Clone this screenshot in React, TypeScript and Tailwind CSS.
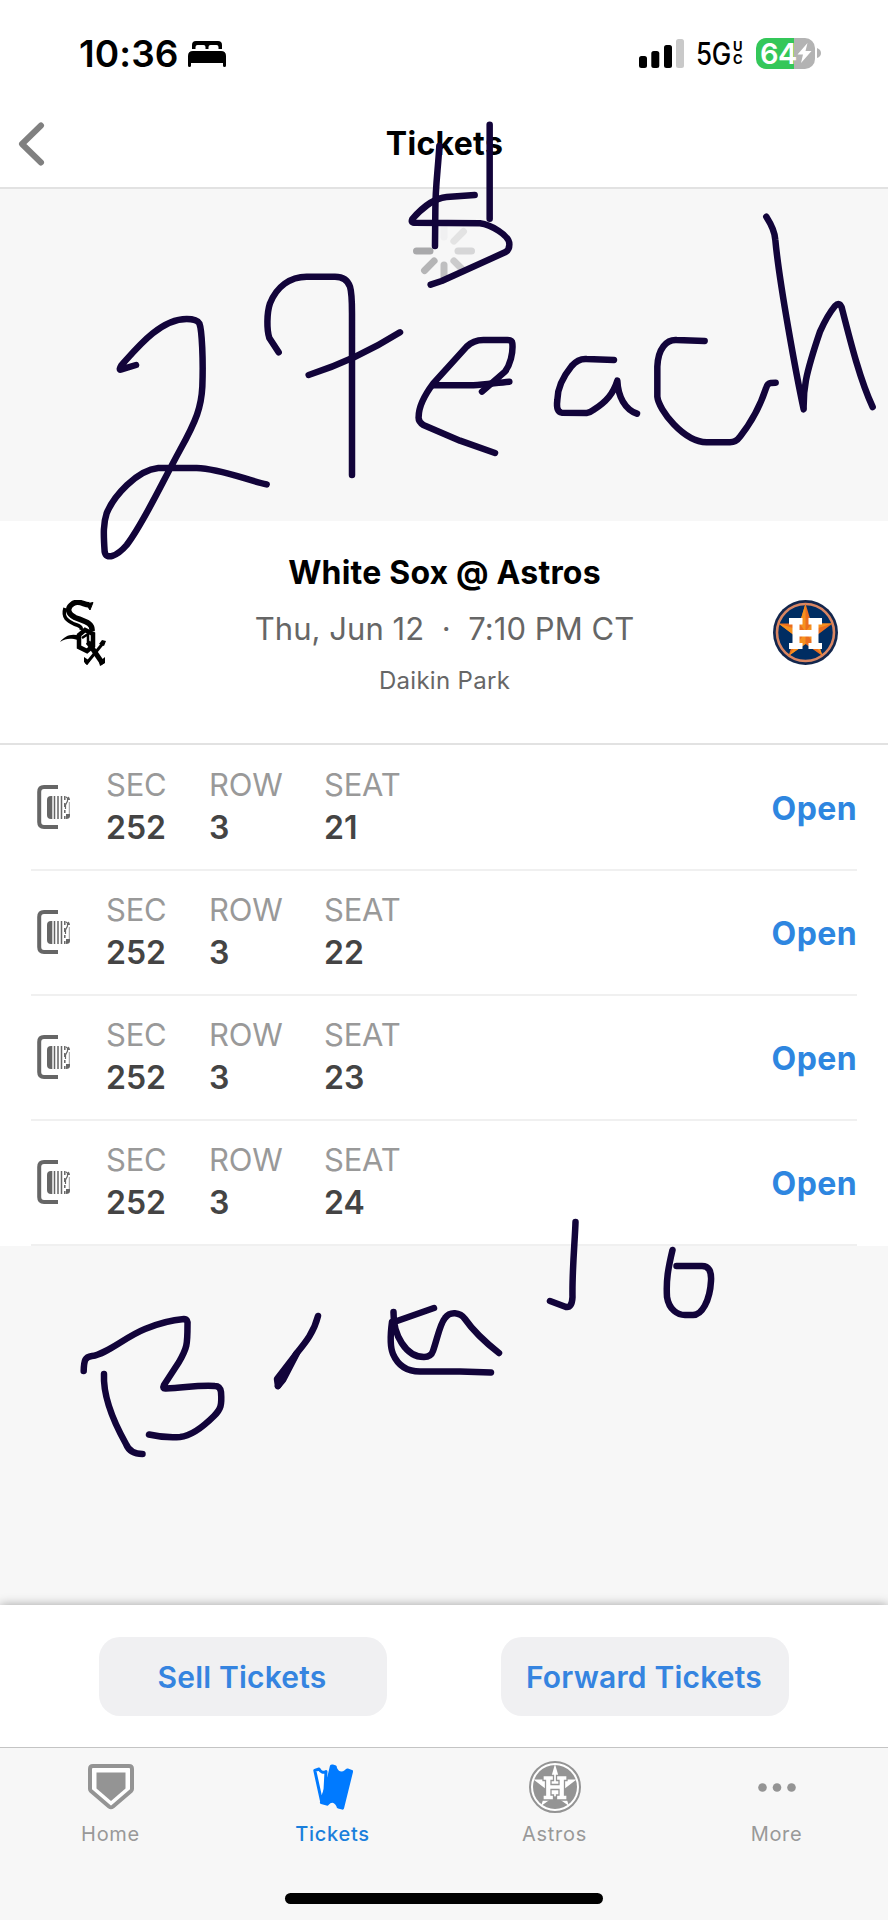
import React from 'react'
import clsx from 'clsx'

const seats = [
  { sec: '252', row: '3', seat: '21' },
  { sec: '252', row: '3', seat: '22' },
  { sec: '252', row: '3', seat: '23' },
  { sec: '252', row: '3', seat: '24' },
]

function BedIcon() {
  return (
    <svg width="38" height="27" viewBox="0 0 38 27" fill="#000">
      <path d="M4 9V5Q4 1 8 1H30Q34 1 34 5V9H30.500V7Q30.500 5 28.500 5H22.500Q20.500 5 20.500 7V9H17.500V7Q17.500 5 15.500 5H9.500Q7.500 5 7.500 7V9Z" />
      <path d="M0 25.500V16Q0 11 5 11H33Q38 11 38 16V25.500Q38 27 36.500 27Q35 27 35 25.500V23H3V25.500Q3 27 1.500 27Q0 27 0 25.500Z" />
    </svg>
  )
}

function StatusBar() {
  return (
    <div className="flex h-[106px] shrink-0 items-center pl-[79px] pr-[67px]">
      <span className="w-[109px] text-[37px] font-semibold leading-none tracking-[0.1px]">10:36</span>
      <BedIcon />
      <div className="ml-auto flex items-center">
        <svg width="45" height="29" viewBox="0 0 45 29">
          <rect x="0" y="17" width="8" height="12" rx="2.500" />
          <rect x="12.300" y="12" width="8" height="17" rx="2.500" />
          <rect x="25" y="6" width="8" height="23" rx="2.500" />
          <rect x="37" y="0" width="8" height="29" rx="2.500" fill="#c9c9c9" />
        </svg>
        <div className="ml-[12px] flex w-[60px] items-center">
          <span className="w-[37px] origin-left scale-x-[0.84] text-[31px] font-medium leading-none tracking-[-0.5px]">5G</span>
          <span className="flex flex-col text-[13px] font-bold leading-[13px]">
            <span>U</span>
            <span>C</span>
          </span>
        </div>
        <div className="flex items-center gap-[2px]">
          <div className="flex h-[31px] w-[59px] items-center rounded-[10px] bg-[linear-gradient(90deg,#34c759_64%,#b3b3b3_64%)] pl-[4px] text-white">
            <span className="w-[37px] text-[29px] font-semibold leading-none tracking-[-0.6px]">64</span>
            <svg width="15" height="20" viewBox="0 0 15 20" fill="#fff">
              <path d="M10.500 0L0.500 11.500H6L4 20L14.500 8H8.500Z" />
            </svg>
          </div>
          <svg width="4" height="10" viewBox="0 0 4 10" fill="#b3b3b3">
            <path d="M0 0Q4 1.500 4 5T0 10Z" />
          </svg>
        </div>
      </div>
    </div>
  )
}

function NavHeader() {
  return (
    <header className="grid h-[83px] shrink-0 grid-cols-3 items-center border-b-2 border-[#e2e2e2] pl-[18px] pb-[5px]">
      <svg width="27" height="44" viewBox="0 0 27 44" fill="none">
        <path d="M23 3.500L4 22L23 40.500" stroke="#808080" strokeWidth="6" strokeLinecap="round" strokeLinejoin="round" />
      </svg>
      <h1 className="-ml-[18px] w-[309px] text-center text-[32px] font-bold leading-none tracking-[0.3px]">Tickets</h1>
    </header>
  )
}

function Spinner() {
  const colors = ['#f0f0f1', '#e3e3e3', '#d6d6d7', '#cbcbcc', '#bfbfc0', '#b5b5b6', '#a9a9ab']
  return (
    <svg width="64" height="64" viewBox="-32 -32 64 64">
      {colors.map((color, i) => (
        <line key={color} y1="-14" y2="-27.500" stroke={color} strokeWidth="7" strokeLinecap="round" transform={`rotate(${i * 45})`} />
      ))}
    </svg>
  )
}

function SoxLogo() {
  return (
    <svg width="46" height="66" viewBox="0 0 46 66" fill="none" stroke="#000">
      {/* S */}
      <path d="M30 4.500C25 6 20-0.500 13 3.500C6 8 8 14 15 17.500C25 21.500 33 23 32 31" strokeWidth="5.500" />
      <path d="M26 4L33 2.500L30 10Z" fill="#000" strokeWidth="1" />
      <path d="M5 8C2 18 8 21 14 24C20 26 22 27 21 30" strokeWidth="3.500" />
      <path d="M0 42C5 36 11 33 20 36L18 40C11 38 6 38 0 42Z" fill="#000" stroke="none" />
      {/* o */}
      <path d="M25 30L19 35V47L27 51L33 46V34Z" strokeWidth="4.500" />
      <path d="M22 38L28 34V45" strokeWidth="2.500" />
      {/* x */}
      <path d="M28 42L43 64" strokeWidth="5" />
      <path d="M44 42L26 64" strokeWidth="3" />
      <path d="M24 57L30 61L27 65L24 62ZM45 57V63L40 66L39 62ZM46 41L42 40L39 44L44 46Z" fill="#000" stroke="none" />
    </svg>
  )
}

function AstrosLogo() {
  return (
    <svg width="65" height="65" viewBox="0 0 65 65">
      <circle cx="32.500" cy="32.500" r="32.500" fill="#12264d" />
      <circle cx="32.500" cy="32.500" r="28.500" fill="#002d62" stroke="#d98663" strokeWidth="2.600" />
      <path d="M32.500 3.500L38.500 23.500H59.500L43 36L49.500 56L32.500 44L15.500 56L22 36L5.500 23.500H26.500Z" fill="#eb6e1f" />
      <path d="M32.500 3.500V32L26.500 23.500ZM5.500 23.500L32.500 32L22 36ZM15.500 56L32.500 32V44ZM59.500 23.500L32.500 32L38.500 23.500ZM49.500 56L32.500 32L43 36Z" fill="#f6911e" />
      <path d="M16 18H29.500V24.500H26.500V30H38.500V24.500H35.500V18H49V24.500H45.500V43H49V49H35.500V43H38.500V36.500H26.500V43H29.500V49H16V43H19.500V24.500H16Z" fill="#fff" />
    </svg>
  )
}

function TicketCodeIcon() {
  return (
    <svg className="mb-[2px]" width="34" height="44" viewBox="0 0 34 44">
      <path d="M21 2H7Q2.200 2 2.200 7V37Q2.200 42 7 42H21" fill="none" stroke="#666" strokeWidth="4" />
      <path d="M14 11H15.300V34H14Q10 34 10 30V15Q10 11 14 11Z" fill="#666" />
      <path d="M17.500 11V34M21 11V34M24.500 11V34" stroke="#666" strokeWidth="1.500" />
      <path d="M27.800 11V15M27.800 18V22M27.800 25V28M27.800 31V34" stroke="#666" strokeWidth="1.500" />
      <path d="M29 12L30.500 13V16L28.500 20V24" fill="none" stroke="#666" strokeWidth="1.200" />
      <path d="M31 11.500Q33 12 33 15H31ZM29 29H33V31Q33 34 29 34Z" fill="#666" />
      <path d="M32.300 17V29" stroke="#999" strokeWidth="1" />
    </svg>
  )
}

function SeatField({ label, value, className }: { label: string; value: string; className: string }) {
  return (
    <div className={clsx('flex flex-col', className)}>
      <span className="text-[31px] leading-[42px] tracking-[-0.2px] text-[#999]">{label}</span>
      <span className="text-[32px] font-semibold leading-[44px] text-[#444]">{value}</span>
    </div>
  )
}

function HomeIcon() {
  return (
    <svg width="46" height="46" viewBox="0 0 46 46">
      <path d="M5 2H41Q44 2 44 5V25Q44 26 43 27L25 42.500Q23 44 21 42.500L3 27Q2 26 2 25V5Q2 2 5 2Z" fill="#fff" stroke="#949494" strokeWidth="4" />
      <path d="M8.500 8.500H37.500V24.500L23 37L8.500 24.500Z" fill="#949494" />
    </svg>
  )
}

function TicketsIcon() {
  return (
    <svg width="40" height="46" viewBox="0 0 40 46">
      <path d="M1.800 6.500L6 5Q9 10 13 7.500L12 26L8.500 37Z" fill="#fff" stroke="#007aff" strokeWidth="3" strokeLinejoin="round" />
      <path d="M17 1.500Q18 0 20 0.500L23 1.500Q24 2 24 4Q27 10 32 6Q33 4 35 4.500L39 6Q40.500 6.500 40 8L31 44.500Q30.500 46 29 45.500L25 44.500Q23.500 44 23.500 42.500Q20 36 15.500 41Q15 42 13.500 41.500L8 40Q6.500 39.500 7 38L9 32L15 10Z" fill="#007aff" />
    </svg>
  )
}

function AstrosTabIcon() {
  return (
    <svg width="52" height="52" viewBox="0 0 52 52">
      <circle cx="26" cy="26" r="25" fill="#fff" stroke="#949494" strokeWidth="2" />
      <circle cx="26" cy="26" r="22" fill="#949494" />
      <path d="M26 3L30.500 18.500H47.500L34.500 28.500L40 45L26 35L12 45L17.500 28.500L4.500 18.500H21.500Z" fill="#fff" />
      <path d="M14 14.500H24.500V19.500H22V23.500H30V19.500H27.500V14.500H38V19.500H35.500V34H38V39H27.500V34H30V28.500H22V34H24.500V39H14V34H16.500V19.500H14Z" fill="#fff" stroke="#949494" strokeWidth="1.300" />
    </svg>
  )
}

function MoreIcon() {
  return (
    <svg width="38" height="9" viewBox="0 0 38 9" fill="#949494">
      <circle cx="4.500" cy="4.500" r="4.300" />
      <circle cx="19" cy="4.500" r="4.300" />
      <circle cx="33.500" cy="4.500" r="4.300" />
    </svg>
  )
}

const tabs = [
  { label: 'Home', icon: <HomeIcon />, active: false },
  { label: 'Tickets', icon: <TicketsIcon />, active: true },
  { label: 'Astros', icon: <AstrosTabIcon />, active: false },
  { label: 'More', icon: <MoreIcon />, active: false },
]

// Freehand markup drawn over the whole screen
function Markup() {
  return (
    <svg
      className="pointer-events-none absolute inset-0"
      width="888"
      height="1920"
      viewBox="0 0 888 1920"
      fill="none"
      stroke="#12043a"
      strokeWidth="6.500"
      strokeLinecap="round"
      strokeLinejoin="round"
    >
      <g transform="translate(80 180) scale(0.33333)" strokeWidth="19.500">
        <path d="M168 555L122 569Q116 570 124 556C170 505 240 417 320 417Q350 417 358 430C366 450 370 540 367 620C364 680 350 720 300 810C240 920 190 1030 140 1095C110 1130 78 1140 74 1115C70 1060 70 1030 80 1000C100 950 170 870 235 864L350 864C420 866 500 900 560 913" />
        <path d="M596 517L568 474C560 450 560 400 570 370C590 320 630 290 680 290L765 290Q800 290 810 320C816 340 816 360 816 400L816 885" />
        <path d="M686 585C780 555 860 520 960 457" />
      </g>
      <g transform="translate(370 110) scale(0.33333)" strokeWidth="19.500">
        <path d="M208 108C204 180 196 230 196 300L195 408" />
        <path d="M359 44V326" />
        <path d="M314 255L230 261C190 264 150 300 127 327Q122 338 132 338L330 340C360 344 420 375 418 404Q418 420 405 427L215 513L182 524" />
        <path d="M190 826H310C350 824 380 818 418 815" />
        <path d="M336 845L405 785C420 765 430 730 427 700Q426 690 412 690H340Q310 690 290 710L190 820C160 860 146 890 146 920Q144 935 160 945L270 992L375 1029" />
        <path d="M732 750L650 747Q625 745 605 768C575 805 562 835 562 870C560 885 558 905 575 908L650 909Q660 908 670 900C710 875 730 850 742 812C744 860 765 898 801 911" />
        <path d="M1004 693L920 690C890 688 864 715 862 770V860C866 900 940 995 1010 997H1080Q1098 997 1110 980C1150 930 1170 890 1188 835Q1192 820 1202 819L1217 818" />
        <path d="M1189 320C1205 345 1215 365 1216 390C1228 520 1280 800 1301 898C1300 840 1304 800 1350 665C1370 620 1385 600 1395 588Q1408 575 1415 592C1440 690 1470 810 1508 891" />
      </g>
      <path d="M83.700 1371C84 1360 85 1357 92 1356C107 1354 125 1337 145 1329C157 1324 172 1320 184 1319Q188 1319 187.500 1325C187.500 1345 187 1348 179 1362L164 1385Q162 1389 166 1388.500C185 1388 195 1385 215 1386Q220 1386 221 1392C222 1405 221 1409 214 1416C200 1430 190 1436 180 1437C167 1438 160 1437 149 1434.500" />
      <path d="M104 1374C103 1394 112 1419 126 1444Q130 1454 142.500 1454" />
      <path d="M318 1316C314 1332 306 1342 296 1354L278 1386" />
      <path d="M297 1353L277 1379L278 1386L283 1380Z" fill="#12043a" />
      <path d="M434 1308L397 1321M393.500 1312C393 1335 406 1357 424 1357Q431 1357 433 1351C438 1336 440 1324 445 1318C450 1311 460 1312 465 1319C474 1332 485 1342 499 1353" />
      <path d="M392 1322C390 1337 390 1347 393 1354C399 1368 410 1372 422 1371.500H460L491 1372.500" />
      <path d="M575.500 1222C575 1240 572 1270 572.500 1297Q572 1308 566 1307L550 1301" />
      <path d="M672.500 1250C668 1269 666 1280 667 1297C669 1310 678 1315 685 1315H692C702 1316 710 1300 711 1281Q712 1266 702 1266H676.500" />
    </svg>
  )
}

export default function App() {
  return (
    <div className="relative flex h-[1920px] w-[888px] flex-col overflow-hidden bg-white font-['Inter',sans-serif] text-black">
      <StatusBar />
      <NavHeader />

      {/* Loading area */}
      <div className="flex h-[332px] shrink-0 justify-center bg-[#f7f7f7] pt-[30px]">
        <Spinner />
      </div>

      {/* Game summary */}
      <section className="flex h-[224px] shrink-0 items-start justify-between border-b-2 border-[#e2e2e2] pl-[60px] pr-[50px]">
        <div className="mt-[79px] w-[56px]">
          <SoxLogo />
        </div>
        <div className="flex flex-col items-center pt-[25px]">
          <h2 className="text-[32px] font-bold leading-[54px] tracking-[0.2px]">White Sox @ Astros</h2>
          <p className="whitespace-pre text-[31px] leading-[58px] tracking-[0.05px] text-[#666]">Thu, Jun 12  ·  7:10 PM CT</p>
          <p className="text-[24px] leading-[45px] tracking-[0.3px] text-[#666]">Daikin Park</p>
        </div>
        <div className="mt-[79px]">
          <AstrosLogo />
        </div>
      </section>

      {/* Seats */}
      <ul className="shrink-0 px-[31px] pt-px">
        {seats.map((s) => (
          <li key={s.seat} className="flex h-[125px] items-center border-b-2 border-[#f0f0f0] pl-[6px]">
            <TicketCodeIcon />
            <div className="flex pb-[2px] pl-[35px]">
              <SeatField label="SEC" value={s.sec} className="w-[103px]" />
              <SeatField label="ROW" value={s.row} className="w-[115px]" />
              <SeatField label="SEAT" value={s.seat} className="w-[100px]" />
            </div>
            <button type="button" className="ml-auto pt-[2px] text-[32px] font-bold tracking-[0.4px] text-[#2e86e0]">Open</button>
          </li>
        ))}
      </ul>

      <div className="flex-1 bg-[#f7f7f7]" />

      {/* Actions */}
      <div className="flex h-[142px] shrink-0 justify-between bg-white px-[99px] pt-[32px] shadow-[0_0_10px_rgba(0,0,0,0.35)]">
        <button type="button" className="h-[79px] w-[288px] rounded-[21px] bg-[#f0f0f2] pr-[2px] pt-[2px] text-[30px] font-semibold tracking-[0.2px] text-[#3584e0]">
          Sell Tickets
        </button>
        <button type="button" className="h-[79px] w-[288px] rounded-[21px] bg-[#f0f0f2] pr-[2px] pt-[2px] text-[30px] font-semibold tracking-[0.2px] text-[#3584e0]">
          Forward Tickets
        </button>
      </div>

      {/* Tab bar */}
      <nav className="relative flex h-[173px] shrink-0 flex-col items-center border-t border-[#c4c4c4] bg-[#f7f7f7]">
        <div className="grid w-full grid-cols-4">
          {tabs.map((tab) => (
            <div key={tab.label} className="flex flex-col items-center pr-px">
              <div className="mt-[13px] flex h-[52px] items-center">{tab.icon}</div>
              <span
                className={clsx(
                  'mt-[7px] text-[20px] leading-[28px] tracking-[0.7px]',
                  tab.active ? 'font-medium text-[#1a7fdc]' : 'text-[#999]'
                )}
              >
                {tab.label}
              </span>
            </div>
          ))}
        </div>
        <div className="mb-[16px] mt-auto h-[11px] w-[318px] rounded-full bg-black" />
      </nav>

      <Markup />
    </div>
  )
}
